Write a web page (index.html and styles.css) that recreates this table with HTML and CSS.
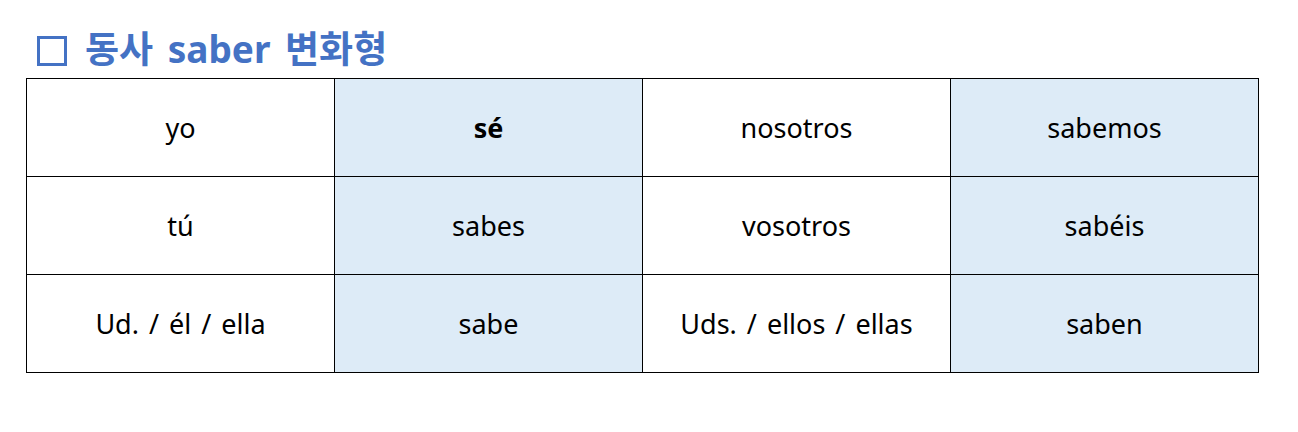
FILE: index.html
```html
<!DOCTYPE html>
<html lang="ko">
<head>
<meta charset="utf-8">
<link rel="stylesheet" href="styles.css">
</head>
<body>
<div class="page">
  <h1 class="title"><span class="box"></span>동사 saber 변화형</h1>
  <table class="conj">
    <tr>
      <td>yo</td><td class="hl"><b>sé</b></td><td>nosotros</td><td class="hl">sabemos</td>
    </tr>
    <tr>
      <td>tú</td><td class="hl">sabes</td><td>vosotros</td><td class="hl">sabéis</td>
    </tr>
    <tr>
      <td>Ud. / él / ella</td><td class="hl">sabe</td><td>Uds. / ellos / ellas</td><td class="hl">saben</td>
    </tr>
  </table>
</div>
</body>
</html>
```

FILE: styles.css
```css
html, body {
  margin: 0;
  padding: 0;
  background: #fff;
}
.page {
  padding: 24px 0 0 26px;
  font-family: "Noto Sans", "Noto Sans CJK KR", sans-serif;
}
.title {
  margin: 0 0 4px 11px;
  font-size: 37px;
  line-height: 50px;
  height: 50px;
  font-weight: 700;
  color: #4472C4;
  display: flex;
  align-items: center;
  gap: 18px;
  word-spacing: 5px;
}
.box {
  flex: none;
  width: 24px;
  height: 24px;
  border: 3px solid #4472C4;
  margin-top: 4px;
}
.conj {
  border-collapse: collapse;
  table-layout: fixed;
  width: 1233px;
}
.conj td {
  border: 1px solid #000;
  width: 307px;
  height: 97px;
  padding: 0;
  text-align: center;
  vertical-align: middle;
  font-size: 27px;
  word-spacing: 3px;
  color: #000;
}
.conj td.hl {
  background: #DDEBF7;
}
```
